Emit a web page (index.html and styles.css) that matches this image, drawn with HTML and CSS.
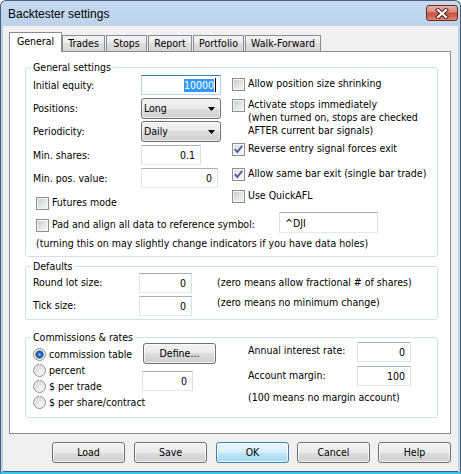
FILE: index.html
```html
<!DOCTYPE html>
<html>
<head>
<meta charset="utf-8">
<title>Backtester settings</title>
<link rel="stylesheet" href="styles.css">
</head>
<body>
<div class="window">
  <div class="titlebar">
    <div class="title">Backtester settings</div>
    <div class="close">
      <svg width="14" height="11" viewBox="0 0 14 11">
        <path d="M3 2 L11 9 M11 2 L3 9" stroke="#5a2020" stroke-width="4.2" stroke-linecap="square" fill="none"/>
        <path d="M3 2 L11 9 M11 2 L3 9" stroke="#ffffff" stroke-width="2.2" stroke-linecap="square" fill="none"/>
      </svg>
    </div>
  </div>
  <div class="client">
    <div class="tabs">
      <div class="tab active t-general">General</div>
      <div class="tab t-trades">Trades</div>
      <div class="tab t-stops">Stops</div>
      <div class="tab t-report">Report</div>
      <div class="tab t-portfolio">Portfolio</div>
      <div class="tab t-wf">Walk-Forward</div>
    </div>
    <div class="panel">
      <div class="group g1">
        <div class="gtitle">General settings</div>
        <div class="cols">
          <div class="lcol">
            <div class="frow r1"><span class="lbl">Initial equity:</span><div class="edit focus w80"><span class="sel">10000</span><span class="caret"></span></div></div>
            <div class="frow r2"><span class="lbl">Positions:</span><div class="combo"><span>Long</span><svg class="arrow" width="7" height="4" viewBox="0 0 7 4"><path d="M0 0H7L3.5 4Z" fill="#000"/></svg></div></div>
            <div class="frow r3"><span class="lbl">Periodicity:</span><div class="combo"><span>Daily</span><svg class="arrow" width="7" height="4" viewBox="0 0 7 4"><path d="M0 0H7L3.5 4Z" fill="#000"/></svg></div></div>
            <div class="frow r4"><span class="lbl">Min. shares:</span><div class="edit w60">0.1</div></div>
            <div class="frow r5"><span class="lbl">Min. pos. value:</span><div class="edit w77">0</div></div>
            <div class="cbrow futures"><span class="cb"></span><span>Futures mode</span></div>
          </div>
          <div class="rcol">
            <div class="cbrow c1"><span class="cb"></span><span>Allow position size shrinking</span></div>
            <div class="cbrow c2"><span class="cb"></span><span>Activate stops immediately<br>(when turned on, stops are checked<br>AFTER current bar signals)</span></div>
            <div class="cbrow c3"><span class="cb on"><svg width="11" height="11" viewBox="0 0 11 11"><path d="M1.8 5.2 L4.3 8 L9.2 1.8" stroke="#4b6496" stroke-width="1.9" fill="none"/></svg></span><span>Reverse entry signal forces exit</span></div>
            <div class="cbrow c4"><span class="cb on"><svg width="11" height="11" viewBox="0 0 11 11"><path d="M1.8 5.2 L4.3 8 L9.2 1.8" stroke="#4b6496" stroke-width="1.9" fill="none"/></svg></span><span>Allow same bar exit (single bar trade)</span></div>
            <div class="cbrow c5"><span class="cb"></span><span>Use QuickAFL</span></div>
          </div>
        </div>
        <div class="padrow">
          <div class="cbrow padcb"><span class="cb"></span><span>Pad and align all data to reference symbol:</span></div>
          <div class="edit left w99 h21">^DJI</div>
        </div>
        <div class="padnote">(turning this on may slightly change indicators if you have data holes)</div>
      </div>

      <div class="group g2">
        <div class="gtitle">Defaults</div>
        <div class="drow d1"><span class="lbl2">Round lot size:</span><div class="edit w53">0</div><span class="dnote n1">(zero means allow fractional # of shares)</span></div>
        <div class="drow d2"><span class="lbl2">Tick size:</span><div class="edit w53">0</div><span class="dnote n2">(zero means no minimum change)</span></div>
      </div>

      <div class="group g3">
        <div class="gtitle gt3">Commissions &amp; rates</div>
        <div class="ccols">
          <div class="radios">
            <div class="rrow"><span class="rd on"></span><span>commission table</span></div>
            <div class="rrow"><span class="rd"></span><span>percent</span></div>
            <div class="rrow"><span class="rd"></span><span>$ per trade</span></div>
            <div class="rrow"><span class="rd"></span><span>$ per share/contract</span></div>
          </div>
          <div class="mid">
            <div class="btn define">Define...</div>
            <div class="edit w51 comm">0</div>
          </div>
          <div class="rates">
            <div class="crow k1"><span class="lbl3">Annual interest rate:</span><div class="edit w54">0</div></div>
            <div class="crow k2"><span class="lbl3">Account margin:</span><div class="edit w54">100</div></div>
            <div class="cnote">(100 means no margin account)</div>
          </div>
        </div>
      </div>
    </div>
    <div class="buttons">
      <div class="btn">Load</div>
      <div class="btn b-save">Save</div>
      <div class="btn default b-ok">OK</div>
      <div class="btn b-cancel">Cancel</div>
      <div class="btn b-help">Help</div>
    </div>
  </div>
</div>
</body>
</html>
```
FILE: styles.css
```css
* { box-sizing: border-box; }
html, body { margin: 0; padding: 0; background: #ffffff; }
body {
  font-family: "DejaVu Sans Condensed", "DejaVu Sans", sans-serif;
  font-size: 10.5px;
  line-height: 13px;
  color: #000;
}
.window {
  width: 461px;
  height: 474px;
  border: 1px solid #4c5e74;
  border-bottom: 2px solid #3cc4ea;
  border-radius: 6px 6px 0 0;
  background: linear-gradient(#c6dbf1, #b9d1ea 30px);
  padding: 0 2px;
  white-space: nowrap;
  display: flex;
  flex-direction: column;
}
.titlebar {
  height: 25px;
  display: flex;
  justify-content: space-between;
  align-items: flex-start;
  flex: none;
}
.title {
  font-family: "Liberation Sans", Arial, sans-serif;
  font-size: 12px;
  line-height: 16px;
  margin: 5px 0 0 5px;
}
.close {
  width: 32px;
  height: 16px;
  margin: 4px 0 0 0;
  border: 1px solid #6a2a2a;
  border-radius: 3px;
  background: linear-gradient(#eab1a4 0%, #dc8d7d 40%, #c75440 50%, #cf6450 75%, #dc8a72 100%);
  display: flex;
  align-items: center;
  justify-content: center;
}
.close svg { display: block; }
.client {
  flex: none;
  height: 446px;
  background: #f0f0f0;
  border-bottom: 1px solid #2f5f93;
}
/* tabs */
.tabs {
  display: flex;
  align-items: flex-end;
  height: 20px;
  margin: 6px 0 -1px 6px;
}
.tab {
  height: 16px;
  margin-bottom: 1px;
  border: 1px solid #898c95;
  border-bottom: none;
  background: linear-gradient(#f3f3f3, #ececec 50%, #dfdfdf 50%, #d6d6d6);
  text-align: center;
  line-height: 15px;
}
.tab.active {
  height: 20px;
  margin-bottom: 0;
  background: #fff;
  line-height: 17px;
  position: relative;
  z-index: 1;
}
.t-general { width: 53px; }
.t-trades { width: 43px; }
.t-stops { width: 41px; margin-left: 1px; }
.t-report { width: 44px; margin-left: 1px; }
.t-portfolio { width: 51px; margin-left: 1px; }
.t-wf { width: 76px; margin-left: 1px; }
.panel {
  margin-left: 6px;
  width: 442px;
  height: 383px;
  border: 1px solid #898c95;
  background: #fff;
  padding: 15px 12px 0 15px;
}
/* groups */
.group {
  border: 1px solid #d5dfe5;
  border-radius: 3px;
  padding-left: 7px;
}
.g1 { height: 190px; }
.g2 { height: 54px; margin-top: 9px; }
.g3 { height: 81px; margin-top: 17px; }
.gtitle {
  width: fit-content;
  margin: -7px 0 0 -2px;
  padding: 0 2px;
  background: #fff;
  line-height: 13px;
}
.gt3 { margin-bottom: -2px; }
.cols { display: flex; margin-top: 1px; }
.lcol { width: 199px; }
.rcol { padding-top: 2px; }
.frow { display: flex; align-items: center; }
.lbl { width: 108px; }
.r1 { height: 20px; margin-bottom: 3px; }
.r2 { height: 21px; margin-bottom: 2px; }
.r3 { height: 21px; margin-bottom: 3px; }
.r4 { height: 20px; margin-bottom: 3px; }
.r5 { height: 20px; }
.cbrow { display: flex; align-items: flex-start; line-height: 13px; }
.futures { margin: 8px 0 0 3px; }
.c1 { margin-bottom: 7px; }
.c2 { margin-bottom: 5px; }
.c3 { margin-bottom: 11px; }
.c4 { margin-bottom: 8px; }
.cb {
  flex: none;
  width: 13px;
  height: 13px;
  margin: 1px 3px 0 0;
  border: 1px solid #8e8f8f;
  background: linear-gradient(135deg, #c4c8cd 0%, #e4e6e8 55%, #f4f4f4 100%);
  box-shadow: inset 0 0 0 1px #f6f6f6;
}
.cb.on { background: linear-gradient(135deg, #d9dce0 0%, #eef0f2 60%, #fafafa 100%); }
.cb svg { display: block; }
.padrow { display: flex; align-items: flex-start; margin-top: 2px; }
.padcb { width: 243px; margin: 6px 0 0 3px; }
.padnote { margin: 4px 0 0 3px; }
/* edits */
.edit {
  flex: none;
  height: 20px;
  border: 1px solid;
  border-color: #abadb3 #dbdfe6 #e3e9ef #e2e3ea;
  background: #fff;
  text-align: right;
  padding: 0 5px;
  line-height: 18px;
  display: flex;
  align-items: center;
  justify-content: flex-end;
}
.edit.left { justify-content: flex-start; }
.edit.focus {
  border-color: #3d7bad #b5cfe7 #b7d9ed #b5cfe7;
  padding-right: 4px;
}
.sel { background: #3399ff; color: #fff; line-height: 13px; }
.caret { width: 1px; height: 14px; background: #000; margin-left: 1px; }
.w80 { width: 80px; }
.w60 { width: 60px; }
.w77 { width: 77px; }
.w99 { width: 99px; }
.w53 { width: 53px; }
.w51 { width: 51px; }
.w54 { width: 54px; }
.h21 { height: 21px; }
/* combos */
.combo {
  flex: none;
  width: 80px;
  height: 21px;
  border: 1px solid #707070;
  border-radius: 3px;
  background: linear-gradient(#f2f2f2, #ebebeb 50%, #dddddd 50%, #cfcfcf);
  box-shadow: inset 0 0 0 1px rgba(255,255,255,0.6);
  display: flex;
  align-items: center;
  justify-content: space-between;
  padding: 0 5px 0 2px;
}
.arrow { display: block; }
/* defaults */
.drow { display: flex; align-items: flex-start; height: 20px; }
.d1 { margin-bottom: 3px; }
.lbl2 { width: 106px; margin-top: 3px; }
.dnote { margin-left: 25px; }
.n1 { margin-top: 3px; }
.n2 { margin-top: 0; }
/* commissions */
.ccols { display: flex; }
.radios { width: 109px; margin-top: 4px; }
.rrow { display: flex; align-items: center; height: 16px; }
.rd {
  flex: none;
  width: 13px;
  height: 13px;
  margin-right: 3px;
  border-radius: 50%;
  border: 1px solid #8e8f8f;
  background: radial-gradient(circle at 65% 70%, #f8f8f8 0%, #e2e2e2 45%, #c9c9c9 100%);
  box-shadow: inset 0 0 0 1px #f4f4f4;
}
.rd.on {
  background: radial-gradient(circle at 50% 50%, #9cc8f2 0px, #2a6bbd 2px, #1b4f95 3px, #5f8fc8 4px, #eef2f6 4.6px, #dadada 100%);
}
.mid { width: 106px; margin-top: 1px; }
.define { margin-left: 1px; width: 74px; }
.comm { margin-top: 7px; }
.crow { display: flex; align-items: flex-start; height: 20px; }
.k1 { margin-bottom: 4px; }
.lbl3 { width: 109px; }
.k1 .lbl3 { margin-top: 2px; }
.k2 .lbl3 { margin-top: 3px; }
.cnote { margin-top: 5px; }
/* buttons */
.btn {
  flex: none;
  width: 73px;
  height: 21px;
  border: 1px solid #707070;
  border-radius: 3px;
  background: linear-gradient(#f2f2f2, #ebebeb 50%, #dddddd 50%, #cfcfcf);
  box-shadow: inset 0 0 0 1px rgba(255,255,255,0.7);
  text-align: center;
  line-height: 19px;
}
.btn.default {
  border-color: #3c7fb1;
  background: linear-gradient(#eaf6fd, #d9f0fc 50%, #bee6fd 50%, #a7d9f5);
  box-shadow: inset 0 0 0 1px rgba(255,255,255,0.8);
}
.buttons { display: flex; margin: 8px 0 0 49px; }
.b-save { margin-left: 9px; }
.b-ok { margin-left: 9px; }
.b-cancel { margin-left: 8px; }
.b-help { margin-left: 8px; }
```
